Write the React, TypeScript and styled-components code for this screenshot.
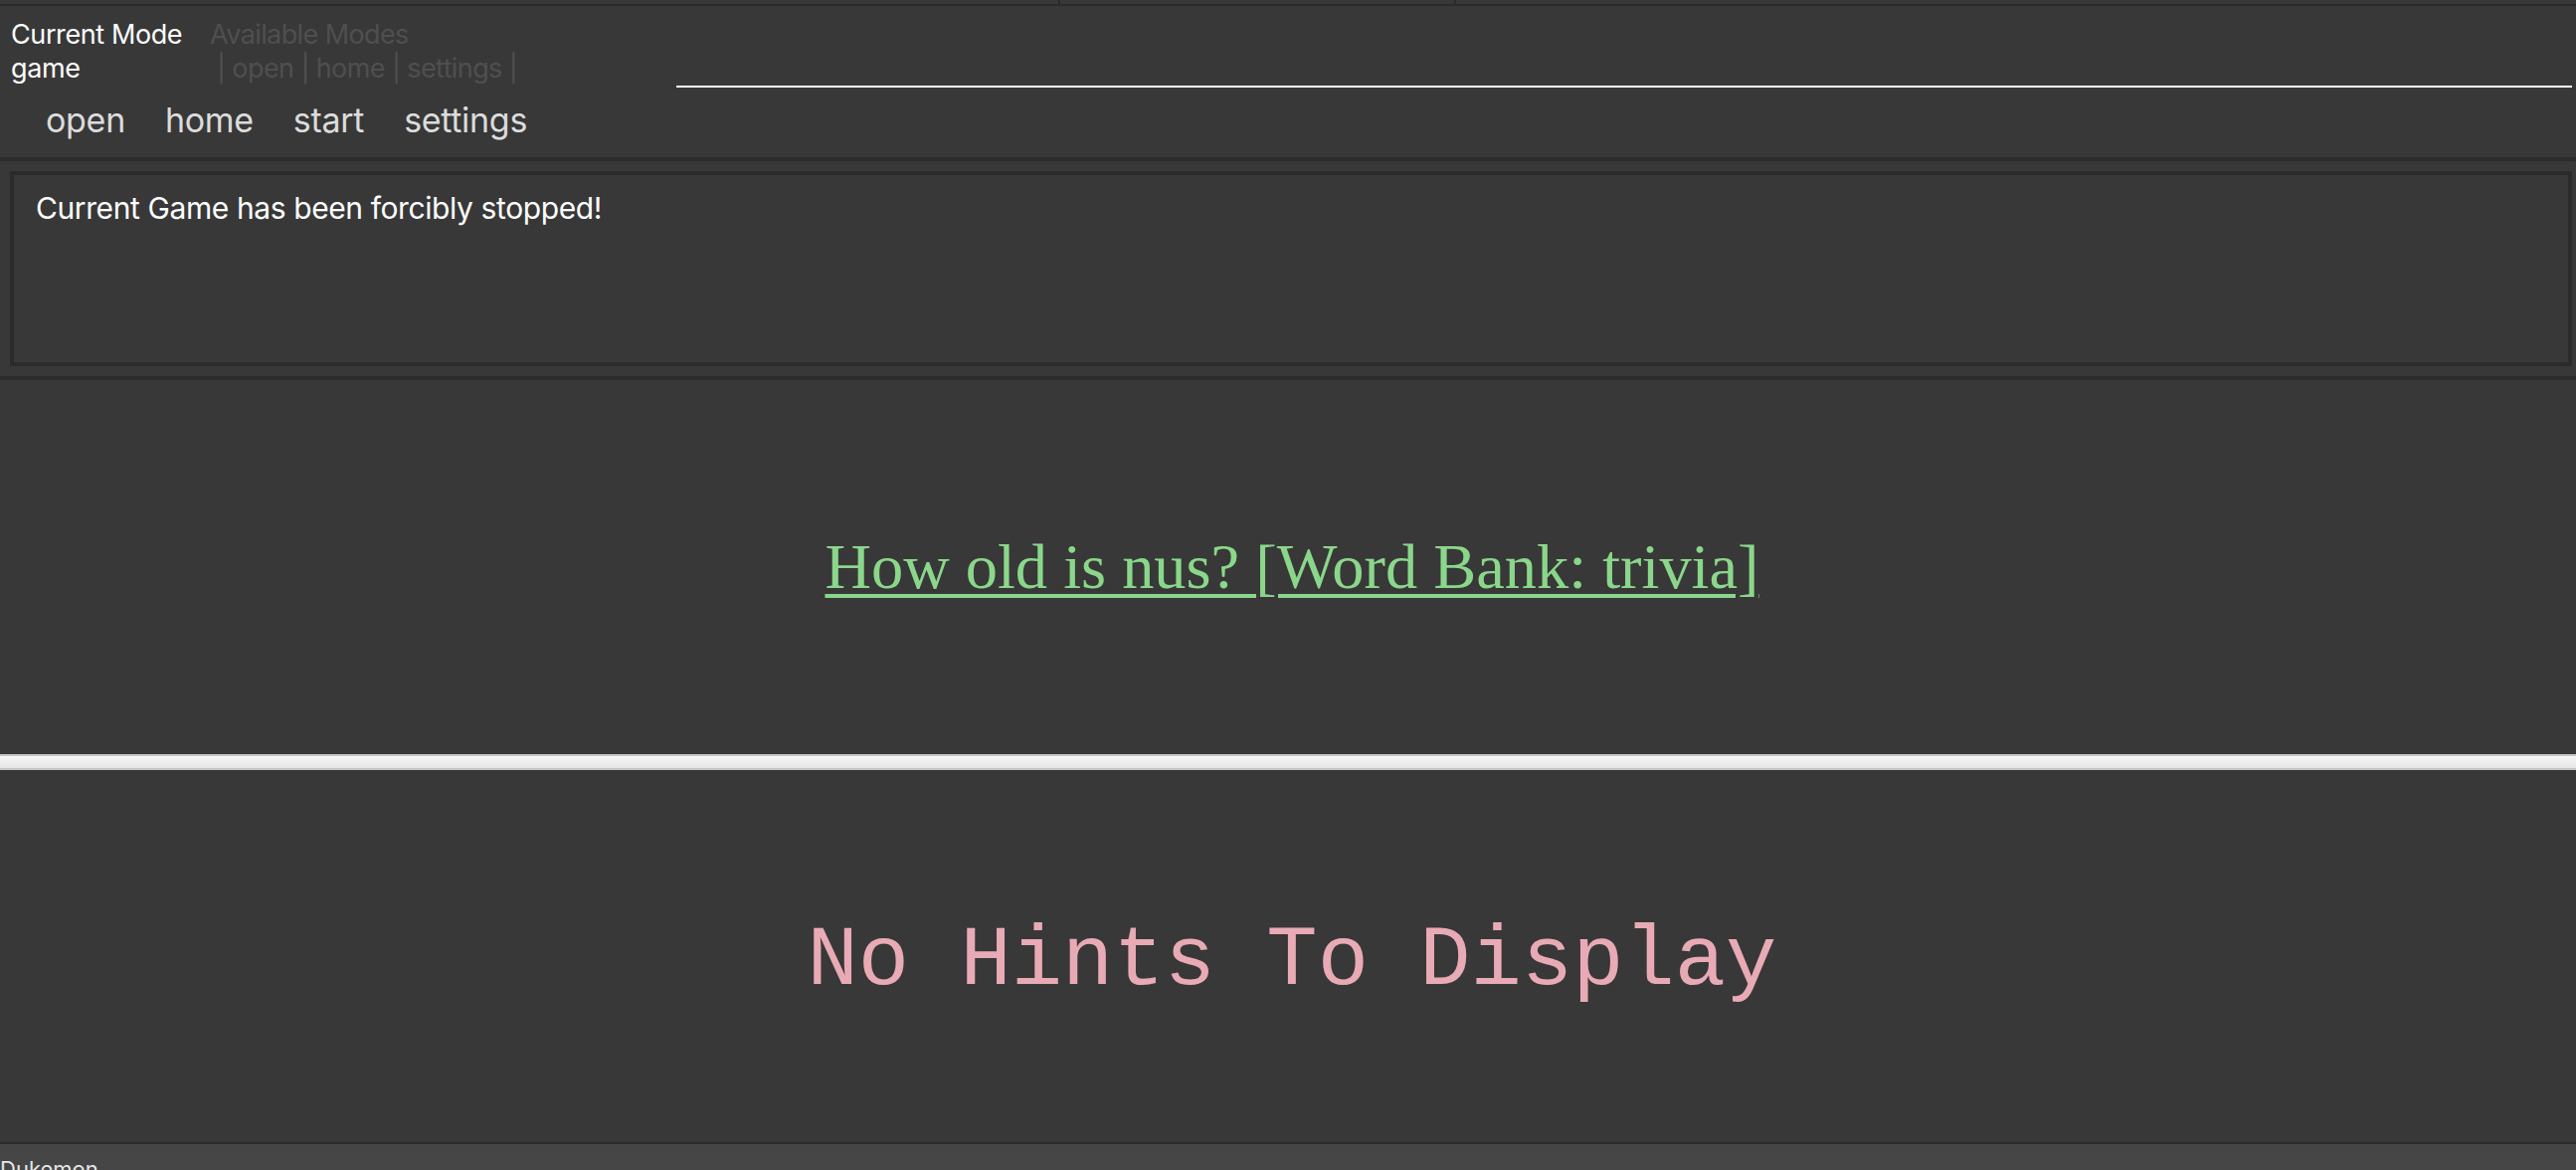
import React from "react";
import styled, { createGlobalStyle } from "styled-components";

const Global = createGlobalStyle`
  html, body { margin: 0; padding: 0; background: #383838; }
  * { box-sizing: border-box; }
`;

const Window = styled.div`
  width: 2590px;
  height: 1176px;
  overflow: hidden;
  display: flex;
  flex-direction: column;
  background: #383838;
  font-family: Inter, "Liberation Sans", sans-serif;
`;

const MenuBar = styled.div`
  height: 6px;
  flex: none;
  display: flex;
  border-bottom: 2px solid #2b2b2b;
`;

const MenuSection = styled.div<{ $w?: number }>`
  height: 4px;
  flex: ${(p) => (p.$w ? `0 0 ${p.$w}px` : "1")};
  border-right: ${(p) => (p.$w ? "2px solid #2b2b2b" : "none")};
`;

const Header = styled.header`
  height: 152px;
  flex: none;
  padding-top: 12px;
  display: flex;
  flex-direction: column;
`;

const TopRow = styled.div`
  display: flex;
  align-items: flex-end;
`;

const ModeBlock = styled.div<{ $w: number; $indent: number }>`
  flex: 0 0 ${(p) => p.$w}px;
  padding-bottom: 2px;
  display: flex;
  flex-direction: column;
  padding-left: ${(p) => p.$indent}px;
`;

const ModeLine = styled.div<{ $muted?: boolean; $shift?: number }>`
  font-size: 27px;
  line-height: 34px;
  height: 34px;
  white-space: nowrap;
  color: ${(p) => (p.$muted ? "#4f4f4f" : "#ffffff")};
  padding-left: ${(p) => p.$shift ?? 0}px;
  letter-spacing: ${(p) => (p.$muted ? "-0.6px" : "-0.4px")};
`;

const Rule = styled.div`
  flex: 1;
  height: 2px;
  margin-right: 4px;
  background: #ffffff;
`;

const Nav = styled.nav`
  display: flex;
  margin-top: 13px;
  padding-left: 26px;
`;

const NavItem = styled.span`
  font-size: 34px;
  line-height: 40px;
  color: #dcdcdc;
  padding: 0 20px;
  letter-spacing: -0.3px;
`;

const Divider = styled.div`
  height: 4px;
  flex: none;
  background: #2b2b2b;
`;

const ResultPane = styled.section`
  flex: none;
  padding: 10px 4px 10px 10px;
`;

const ResultBox = styled.div`
  height: 196px;
  border: 4px solid #2b2b2b;
  padding: 15px 22px;
  font-size: 30px;
  line-height: 1.21;
  color: #ffffff;
  letter-spacing: -0.4px;
`;

const QuestionPane = styled.section`
  height: 376px;
  flex: none;
  padding-left: 8px;
  display: flex;
  align-items: center;
  justify-content: center;
`;

const Question = styled.span`
  font-family: "Liberation Serif", "Times New Roman", serif;
  font-size: 64.4px;
  color: #8ad68a;
  text-decoration: underline;
  text-decoration-thickness: 4px;
  text-underline-offset: 6px;
`;

const Splitter = styled.div`
  height: 16px;
  flex: none;
  border-top: 2px solid #c6c6c6;
  border-bottom: 2px solid #c6c6c6;
  background: linear-gradient(#f6f6f6, #e6e6e6);
`;

const HintsPane = styled.section`
  height: 374px;
  flex: none;
  padding-top: 10px;
  padding-left: 8px;
  display: flex;
  align-items: center;
  justify-content: center;
`;

const Hints = styled.span`
  font-family: "Liberation Mono", "Courier New", monospace;
  font-size: 85.5px;
  color: #e8aab4;
`;

const StatusBar = styled.footer`
  flex: 1;
  border-top: 2px solid #2b2b2b;
  background: #464646;
  padding-top: 12px;
  font-size: 22px;
  color: #e6e6e6;
  white-space: nowrap;
`;

export default function App() {
  return (
    <>
      <Global />
      <Window>
        <MenuBar>
          <MenuSection $w={1066} />
          <MenuSection $w={398} />
          <MenuSection />
        </MenuBar>
        <Header>
          <TopRow>
            <ModeBlock $w={211} $indent={11}>
              <ModeLine>Current Mode</ModeLine>
              <ModeLine>game</ModeLine>
            </ModeBlock>
            <ModeBlock $w={469} $indent={0}>
              <ModeLine $muted>Available Modes</ModeLine>
              <ModeLine $muted $shift={7}>| open | home | settings |</ModeLine>
            </ModeBlock>
            <Rule />
          </TopRow>
          <Nav>
            <NavItem>open</NavItem>
            <NavItem>home</NavItem>
            <NavItem>start</NavItem>
            <NavItem>settings</NavItem>
          </Nav>
        </Header>
        <Divider />
        <ResultPane>
          <ResultBox>Current Game has been forcibly stopped!</ResultBox>
        </ResultPane>
        <Divider />
        <QuestionPane>
          <Question>How old is nus? [Word Bank: trivia]</Question>
        </QuestionPane>
        <Splitter />
        <HintsPane>
          <Hints>No Hints To Display</Hints>
        </HintsPane>
        <StatusBar>Dukemon</StatusBar>
      </Window>
    </>
  );
}
